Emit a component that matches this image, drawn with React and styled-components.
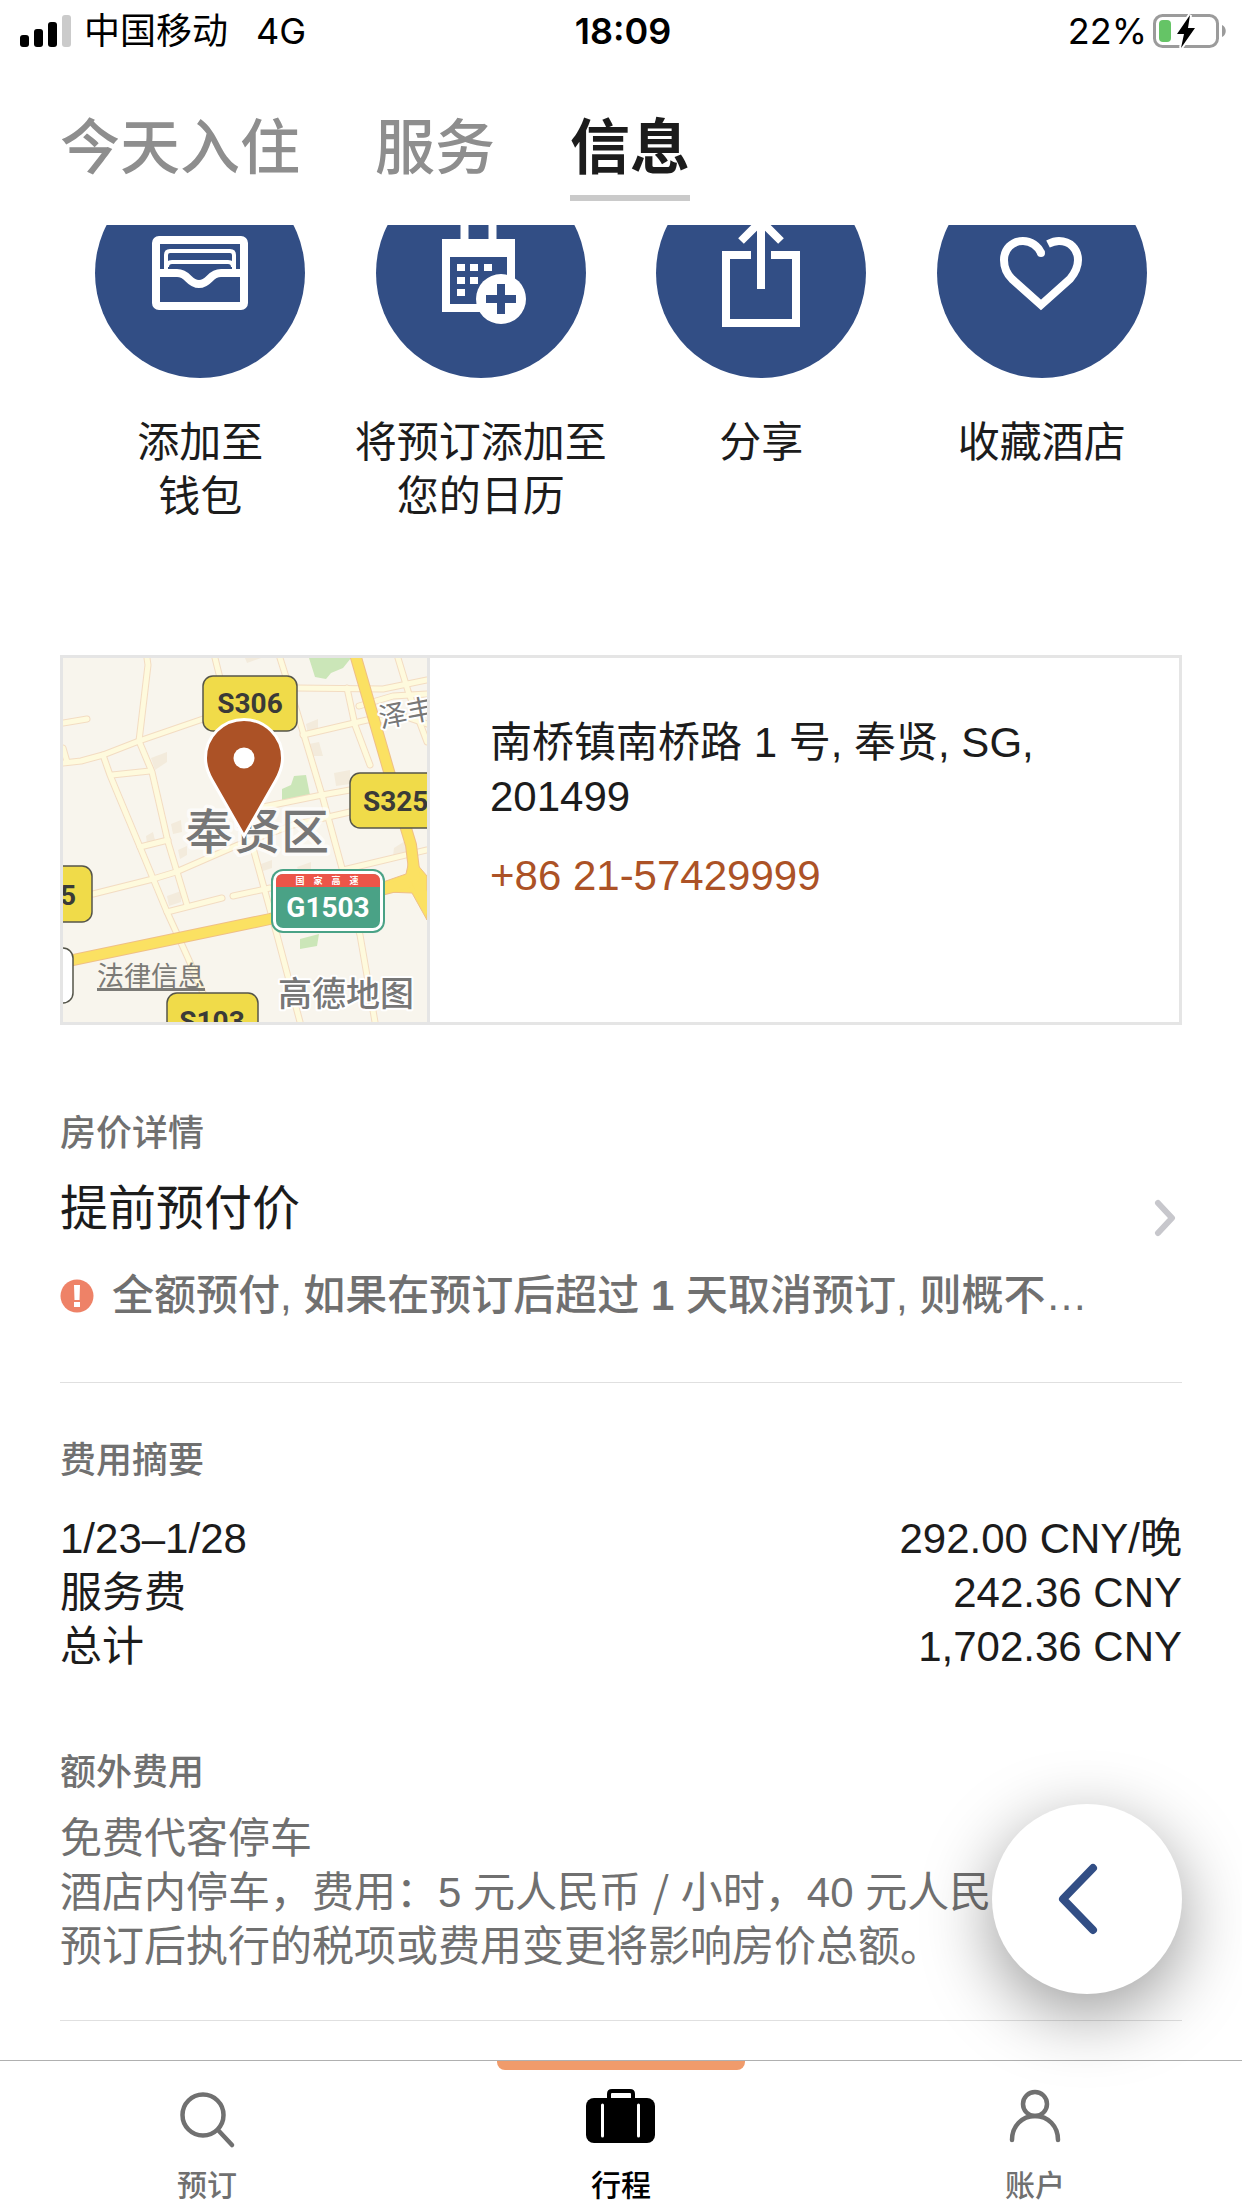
import React from "react";
import styled, { createGlobalStyle, css } from "styled-components";

const color = {
  ink: "#1c1c1c",
  muted: "#707070",
  tabIdle: "#8e8e8e",
  line: "#e0e0e0",
  frame: "#e5e5e5",
  blue: "#324e85",
  rust: "#ac5226",
  alert: "#ee8267",
  accent: "#f09b6b",
};

const GlobalStyle = createGlobalStyle`
  *, *::before, *::after { box-sizing: border-box; }
  body {
    margin: 0;
    background: #fff;
    color: ${color.ink};
    font-family: "Liberation Sans", "Noto Sans CJK SC", sans-serif;
    font-size: 42px;
    line-height: 54px;
  }
  button {
    margin: 0;
    padding: 0;
    border: 0;
    background: none;
    color: inherit;
    font: inherit;
    cursor: pointer;
  }
  a { color: inherit; text-decoration: none; }
  h2, p { margin: 0; }
  svg { display: block; flex: none; }
`;

const Screen = styled.div`
  display: flex;
  flex-direction: column;
  height: 100vh;
  background: #fff;
`;

/* ---------- status bar ---------- */

const StatusBar = styled.header`
  display: grid;
  grid-template-columns: 1fr auto 1fr;
  align-items: center;
  height: 62px;
  padding: 0 16px 0 20px;
  color: #000;
  font-family: Inter, "Noto Sans CJK SC", sans-serif;
  font-size: 36px;
  line-height: 44px;
`;

const StatusGroup = styled.div`
  display: flex;
  align-items: center;
  justify-content: ${(p) => (p.$end ? "flex-end" : "flex-start")};
  gap: ${(p) => (p.$end ? 4 : 12)}px;
`;

const Network = styled.span`
  margin-left: 16px;
`;

const Clock = styled.time`
  font-weight: 600;
`;

/* ---------- top tabs ---------- */

const TopTabs = styled.nav`
  display: flex;
  gap: 75px;
  padding: 51px 60px 24px;
`;

const TopTab = styled.button`
  padding-bottom: 10px;
  border-bottom: 6px solid ${(p) => (p.$active ? "#cacaca" : "transparent")};
  color: ${(p) => (p.$active ? color.ink : color.tabIdle)};
  font-size: 60px;
  font-weight: ${(p) => (p.$active ? 700 : 500)};
  line-height: 72px;
`;

/* ---------- scrolled content ---------- */

const Viewport = styled.main`
  flex: 1;
  min-height: 0;
  overflow: hidden;
`;

const Content = styled.div`
  margin-top: -57px;
  padding: 0 60px;
`;

const Actions = styled.div`
  display: grid;
  grid-template-columns: repeat(4, 1fr);
`;

const Action = styled.button`
  display: flex;
  flex-direction: column;
  align-items: center;
  gap: 38px;
  white-space: pre-line;
`;

const Disc = styled.span`
  width: 210px;
  height: 210px;
  border-radius: 50%;
  background: ${color.blue};
`;

const HotelCard = styled.section`
  display: flex;
  margin-top: 131px;
  border: 3px solid ${color.frame};
`;

const MapTile = styled.div`
  position: relative;
  flex: none;
  width: 367px;
  border-right: 3px solid ${color.frame};
`;

const LegalLink = styled.a`
  position: absolute;
  left: 34px;
  bottom: 29px;
  color: #7b7a76;
  font-size: 27px;
  line-height: 32px;
  text-decoration: underline;
  text-decoration-thickness: 3px;
  text-underline-offset: 2px;
`;

const Contact = styled.address`
  display: flex;
  flex-direction: column;
  align-items: flex-start;
  gap: 25px;
  padding: 58px 60px;
  font-style: normal;
`;

const Phone = styled.a`
  color: ${color.rust};
`;

const Section = styled.section`
  padding: ${(p) => p.$top}px 0 ${(p) => p.$bottom}px;
  border-bottom: 1px solid ${color.line};
`;

const Caption = styled.h2`
  color: ${color.muted};
  font-size: 36px;
  font-weight: 500;
  line-height: 44px;
`;

const RateButton = styled.button`
  display: flex;
  align-items: center;
  justify-content: space-between;
  width: 100%;
  padding-right: 4px;
  text-align: left;
`;

const RateText = styled.span`
  display: flex;
  flex-direction: column;
`;

const RateName = styled.span`
  margin: 23px 0 30px;
  font-size: 48px;
  line-height: 60px;
`;

const Notice = styled.span`
  display: flex;
  align-items: center;
  gap: 18px;
  color: ${color.muted};
  font-weight: 500;
`;

const Fees = styled.table`
  width: 100%;
  margin: 29px 0 77px;
  border-collapse: collapse;

  th, td { padding: 0; font-weight: 400; }
  th { text-align: left; }
  td { text-align: right; }
`;

const Extras = styled.p`
  margin-top: 17px;
  color: ${color.muted};
  white-space: nowrap;
`;

const Slash = styled.span`
  font-family: "Noto Sans CJK SC", sans-serif;
  line-height: 1;
`;

const BackButton = styled.button`
  position: fixed;
  right: 60px;
  bottom: 214px;
  z-index: 2;
  display: grid;
  place-items: center;
  width: 190px;
  height: 190px;
  border-radius: 50%;
  background: #fff;
  box-shadow: 0 20px 70px rgba(0, 0, 0, 0.4);
`;

/* ---------- bottom bar ---------- */

const BottomBar = styled.nav`
  display: grid;
  grid-template-columns: repeat(3, 1fr);
  height: 148px;
  border-top: 1px solid #b0b0b0;
  background: #fff;
`;

const BottomItem = styled.a`
  position: relative;
  display: flex;
  flex-direction: column;
  align-items: center;
  gap: 17px;
  padding-top: 24px;
  color: ${color.muted};
  font-size: 30px;
  font-weight: 500;
  line-height: 36px;

  ${(p) =>
    p.$active &&
    css`
      color: #000;

      &::before {
        content: "";
        position: absolute;
        top: 0;
        left: 20%;
        right: 20%;
        height: 9px;
        border-radius: 0 0 8px 8px;
        background: ${color.accent};
      }
    `}
`;

/* ---------- drawings ---------- */

const SignalIcon = () => (
  <svg width="52" height="34" viewBox="0 0 52 34" aria-hidden="true">
    <rect x="0" y="21" width="9" height="12" rx="3" />
    <rect x="14" y="15" width="9" height="18" rx="3" />
    <rect x="28" y="8" width="9" height="25" rx="3" />
    <rect x="42" y="1" width="9" height="32" rx="3" fill="#cbcbcb" />
  </svg>
);

const BatteryIcon = () => (
  <svg width="75" height="36" viewBox="0 0 75 36" aria-hidden="true">
    <rect x="3.5" y="2.5" width="63" height="31" rx="8" fill="none" stroke="#9b9b9b" strokeWidth="3" />
    <path d="M71 12c5 2 5 10 0 12z" fill="#9b9b9b" />
    <rect x="8" y="7" width="12" height="22" rx="4" fill="#65c466" />
    <path
      d="M39 2L26 21H33L30 35L44 15H37Z"
      fill="#000"
      stroke="#fff"
      strokeWidth="4"
      paintOrder="stroke"
    />
  </svg>
);

const DiscIcon = ({ children }) => (
  <svg width="210" height="210" viewBox="0 0 210 210" fill="none" stroke="#fff" strokeWidth="8" aria-hidden="true">
    {children}
  </svg>
);

const WalletIcon = () => (
  <DiscIcon>
    <rect x="61" y="72" width="88" height="66" rx="3" />
    <path d="M71 103V87q0-4 4-4H135q4 0 4 4V103" strokeWidth="4" />
    <path d="M72 99q0-5 5-5H133q5 0 5 5" strokeWidth="4" />
    <path d="M61 105H82C94 105 93 116 104 116S114 105 126 105H149" />
  </DiscIcon>
);

const CalendarIcon = () => (
  <DiscIcon>
    <path d="M88.500 45V75M116.500 45V75" />
    <path d="M66 71H139V144H66ZM74 89V136H131V89Z" fill="#fff" fillRule="evenodd" stroke="none" />
    <path
      d="M81 96h8v7h-8zM94 96h8v7h-8zM108 96h8v7h-8zM81 109h8v7h-8zM94 109h8v7h-8zM81 121h8v7h-8z"
      fill="#fff"
      stroke="none"
    />
    <circle cx="125" cy="131" r="25" fill="#fff" stroke="none" />
    <path d="M110 131H140M125 116V146" stroke={color.blue} />
  </DiscIcon>
);

const ShareIcon = () => (
  <DiscIcon>
    <path d="M95 87H70V155H140V87H115" />
    <path d="M105 53V121M85 73L105 53L125 73" />
  </DiscIcon>
);

const HeartIcon = () => (
  <DiscIcon>
    <path d="M104 85C101 78 94 73 86 73C75 73 67 81 67 92C67 99 69 105 75 111L104 137L133 111C138 105 141 99 141 92C141 81 133 73 122 73C118 73 115 74 111 76" />
    <circle cx="104" cy="85" r="4" fill="#fff" stroke="none" />
  </DiscIcon>
);

const AlertIcon = () => (
  <svg width="34" height="34" viewBox="0 0 34 34" aria-hidden="true">
    <circle cx="17" cy="17" r="16.500" fill={color.alert} />
    <path d="M14 6H20L19.500 21H14.500ZM14 23H20V28H14Z" fill="#fff" />
  </svg>
);

const ForwardIcon = () => (
  <svg width="24" height="40" viewBox="0 0 24 40" fill="none" aria-hidden="true">
    <path d="M4 5L18 20L4 35" stroke="#c7c7cc" strokeWidth="6" strokeLinecap="round" strokeLinejoin="round" />
  </svg>
);

const BackIcon = () => (
  <svg width="60" height="80" viewBox="0 0 60 80" fill="none" aria-hidden="true">
    <path d="M36 9L6 40L36 71" stroke={color.blue} strokeWidth="8" strokeLinecap="round" strokeLinejoin="round" />
  </svg>
);

const SearchIcon = () => (
  <svg width="60" height="66" viewBox="0 0 60 66" fill="none" stroke="currentColor" strokeWidth="4.500" aria-hidden="true">
    <circle cx="26" cy="30" r="20.500" />
    <path d="M41 45L55 60" strokeLinecap="round" />
  </svg>
);

const SuitcaseIcon = () => (
  <svg width="72" height="66" viewBox="0 0 72 66" aria-hidden="true">
    <path d="M24 16V9Q24 6 27 6H45Q48 6 48 9V16" fill="none" stroke="currentColor" strokeWidth="4" />
    <rect x="1" y="13" width="69" height="45" rx="8" fill="currentColor" />
    <path d="M17.500 20V51M53.500 20V51" stroke="#fff" strokeWidth="3" strokeLinecap="round" />
  </svg>
);

const PersonIcon = () => (
  <svg width="60" height="66" viewBox="0 0 60 66" fill="none" stroke="currentColor" strokeWidth="4.500" aria-hidden="true">
    <circle cx="30" cy="19" r="12" />
    <path d="M7 55C7 41 17 31 30 31S53 41 53 55" strokeLinecap="round" />
  </svg>
);

const streets = [
  "M0 65L24 61",
  "M84 0L85 7L76 83L89 114L105 184L124 247",
  "M0 105L18 103L40 97L76 83L140 61",
  "M0 90L4 104",
  "M40 97L47 117L54 134L77 189L104 254L125 300L140 335",
  "M49 117L87 113",
  "M77 189L105 182",
  "M30 236L90 221L113 214L175 187L230 167L287 154",
  "M104 254L159 240",
  "M170 238L207 230",
  "M152 0L157 20",
  "M217 0L234 54L259 137L280 214L297 277L312 364",
  "M234 30L320 31L364 22",
  "M240 77L304 62L318 62",
  "M284 30L292 67L307 107",
  "M200 149L259 137L287 132",
  "M190 190L214 277L237 364",
  "M280 212L364 192",
  "M335 0L345 33L364 84",
  "M296 48L330 38L364 36",
  "M340 58L364 66",
];

const buildings = [
  "M88 100L104 94V104L92 112Z",
  "M243 66L255 61V74L245 76Z",
  "M246 86L256 84L260 98L248 98Z",
  "M271 115L287 112V126L273 128Z",
  "M108 166L118 162L119 174L110 176Z",
  "M104 238L118 233V244L106 248Z",
  "M198 206L209 202V210L200 213Z",
  "M234 209L248 204V212L236 214Z",
  "M331 190L342 183L343 195L330 198Z",
  "M115 192L124 188V197L117 201Z",
  "M83 178L90 174L92 182L84 186Z",
  "M182 0L198 0L184 5Z",
];

const MapDrawing = () => (
  <svg
    width="364"
    height="364"
    viewBox="0 0 364 364"
    role="img"
    aria-label="奉贤区"
    fontFamily='Roboto, "Noto Sans CJK SC", sans-serif'
  >
    <rect width="364" height="364" fill="#f8f5ed" />
    <g fill="#f3ebdc">
      {buildings.map((d) => (
        <path key={d} d={d} />
      ))}
    </g>
    <path
      d="M246 0H288L280 10L268 15L263 21L252 19ZM219 131L228 127L231 118L243 117L247 137L219 142ZM237 281L256 276L254 288L237 291Z"
      fill="#cbe6b8"
    />
    <g fill="none" strokeLinecap="round" strokeLinejoin="round">
      <g stroke="#f3dcc2" strokeWidth="7">
        {streets.map((d) => (
          <path key={d} d={d} />
        ))}
      </g>
      <g stroke="#fefadd" strokeWidth="5">
        {streets.map((d) => (
          <path key={d} d={d} />
        ))}
      </g>
      <g stroke="#efbf86">
        <path d="M-4 305L207 261L345 225" strokeWidth="12" />
        <path d="M292 -4L327 117L348 187L352 220L370 258" strokeWidth="12" />
      </g>
      <path d="M320 224L343 216L347 198L364 218V262L349 235L322 234Z" fill="#fbe162" stroke="#efbf86" strokeWidth="1" />
      <g stroke="#fbe162">
        <path d="M-4 305L207 261L345 225" strokeWidth="10" />
        <path d="M292 -4L327 117L348 187L352 220L370 258" strokeWidth="10" />
      </g>
    </g>

    <g fill="#777" stroke="#fff" paintOrder="stroke" strokeLinejoin="round">
      <text x="122" y="191" fontSize="48" fontWeight="500" strokeWidth="7" strokeOpacity="0.700">
        奉贤区
      </text>
      <text x="318" y="70" fontSize="28" strokeWidth="4" transform="rotate(-11 318 70)">
        泽丰
      </text>
      <text x="215" y="348" fontSize="34" fontWeight="500" strokeWidth="4">
        高德地图
      </text>
    </g>

    <g fill="#f0db49" stroke="#55554a" strokeWidth="1.500">
      <rect x="140" y="18" width="94" height="55" rx="10" />
      <rect x="287" y="115" width="94" height="55" rx="10" />
      <rect x="-65" y="208" width="94" height="56" rx="10" />
      <rect x="104" y="335" width="91" height="55" rx="10" />
      <rect x="-50" y="290" width="60" height="55" rx="10" fill="#fff" />
    </g>
    <g fill="#3a3a38" fontSize="28" fontWeight="700">
      <text x="187" y="55" textAnchor="middle">S306</text>
      <text x="300" y="153">S325</text>
      <text x="-3" y="247">5</text>
      <text x="149" y="373" textAnchor="middle">S103</text>
    </g>

    <rect x="208" y="211" width="114" height="64" rx="12" fill="#4aa286" />
    <rect x="210" y="213" width="110" height="60" rx="10" fill="#fff" />
    <rect x="213" y="216" width="104" height="54" rx="7" fill="#4aa286" />
    <path d="M213 229V223Q213 216 220 216H310Q317 216 317 223V229Z" fill="#ec5549" />
    <g fill="#fff" fontWeight="700" textAnchor="middle">
      <g fontSize="9">
        <text x="237" y="226">国</text>
        <text x="255" y="226">家</text>
        <text x="273" y="226">高</text>
        <text x="291" y="226">速</text>
      </g>
      <text x="265" y="259" fontSize="28">G1503</text>
    </g>

    <path
      d="M181 178L149 122C145 115 142.500 109 142.500 100A38.500 38.500 0 0 1 219.500 100C219.500 109 217 115 213 122Z"
      fill={color.rust}
      stroke="#fff"
      strokeWidth="3"
    />
    <circle cx="181" cy="100" r="10.500" fill="#fff" />
  </svg>
);

/* ---------- data ---------- */

const topTabs = ["今天入住", "服务", "信息"];

const actions = [
  { label: "添加至\n钱包", Icon: WalletIcon },
  { label: "将预订添加至\n您的日历", Icon: CalendarIcon },
  { label: "分享", Icon: ShareIcon },
  { label: "收藏酒店", Icon: HeartIcon },
];

const fees = [
  ["1/23–1/28", "292.00 CNY/晚"],
  ["服务费", "242.36 CNY"],
  ["总计", "1,702.36 CNY"],
];

const bottomItems = [
  { label: "预订", Icon: SearchIcon },
  { label: "行程", Icon: SuitcaseIcon },
  { label: "账户", Icon: PersonIcon },
];

export default function App() {
  return (
    <Screen>
      <GlobalStyle />

      <StatusBar>
        <StatusGroup>
          <SignalIcon />
          <span>中国移动</span>
          <Network>4G</Network>
        </StatusGroup>
        <Clock>18:09</Clock>
        <StatusGroup $end>
          <span>22%</span>
          <BatteryIcon />
        </StatusGroup>
      </StatusBar>

      <TopTabs>
        {topTabs.map((label) => (
          <TopTab key={label} type="button" $active={label === "信息"}>
            {label}
          </TopTab>
        ))}
      </TopTabs>

      <Viewport>
        <Content>
          <Actions>
            {actions.map(({ label, Icon }) => (
              <Action key={label} type="button">
                <Disc>
                  <Icon />
                </Disc>
                <span>{label}</span>
              </Action>
            ))}
          </Actions>

          <HotelCard>
            <MapTile>
              <MapDrawing />
              <LegalLink href="#legal">法律信息</LegalLink>
            </MapTile>
            <Contact>
              <span>南桥镇南桥路 1 号, 奉贤, SG, 201499</span>
              <Phone href="tel:+862157429999">+86 21-57429999</Phone>
            </Contact>
          </HotelCard>

          <Section $top={87} $bottom={59}>
            <RateButton type="button">
              <RateText>
                <Caption as="span">房价详情</Caption>
                <RateName>提前预付价</RateName>
                <Notice>
                  <AlertIcon />
                  <span>
                    全额预付, 如果在预订后超过 <strong>1</strong> 天取消预订, 则概不…
                  </span>
                </Notice>
              </RateText>
              <ForwardIcon />
            </RateButton>
          </Section>

          <Section $top={56} $bottom={46}>
            <Caption>费用摘要</Caption>
            <Fees>
              <tbody>
                {fees.map(([name, amount]) => (
                  <tr key={name}>
                    <th scope="row">{name}</th>
                    <td>{amount}</td>
                  </tr>
                ))}
              </tbody>
            </Fees>
            <Caption>额外费用</Caption>
            <Extras>
              免费代客停车
              <br />
              酒店内停车，费用：5 元人民币 <Slash>/</Slash> 小时，40 元人民
              <br />
              预订后执行的税项或费用变更将影响房价总额。
            </Extras>
          </Section>
        </Content>
      </Viewport>

      <BackButton type="button" aria-label="返回">
        <BackIcon />
      </BackButton>

      <BottomBar>
        {bottomItems.map(({ label, Icon }) => (
          <BottomItem key={label} href="#" $active={label === "行程"}>
            <Icon />
            {label}
          </BottomItem>
        ))}
      </BottomBar>
    </Screen>
  );
}
